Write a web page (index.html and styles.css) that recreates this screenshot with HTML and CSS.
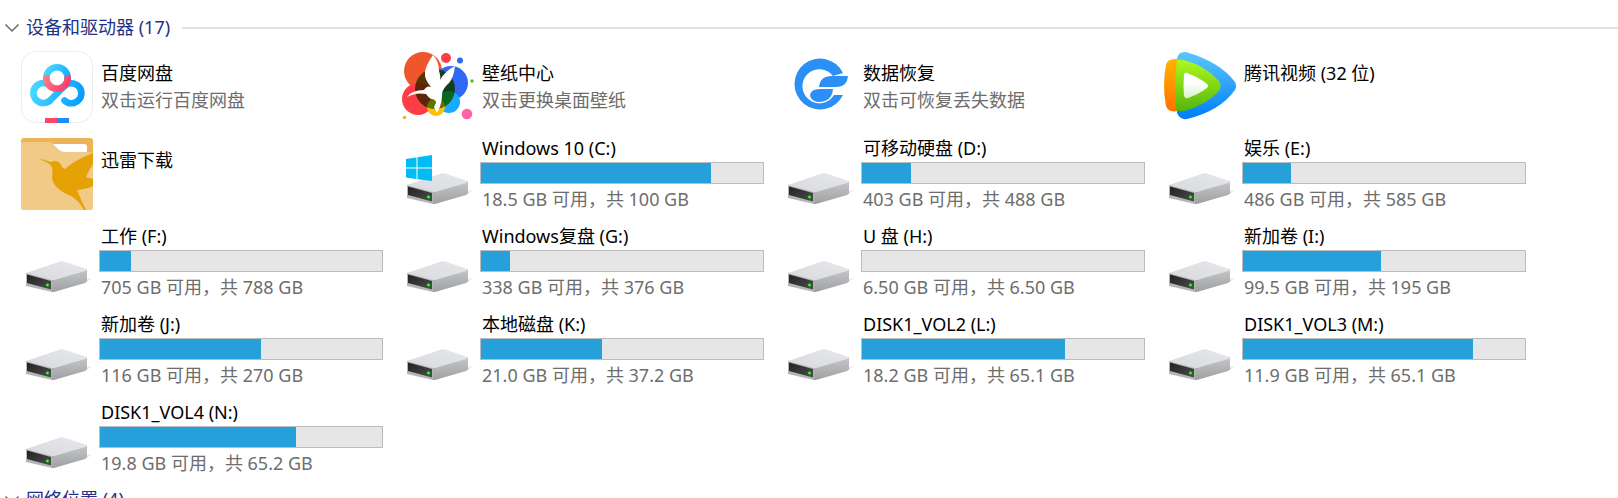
FILE: index.html
```
<!DOCTYPE html>
<html lang="zh-CN">
<head>
  <meta charset="UTF-8" />
  <meta name="viewport" content="width=device-width, initial-scale=1.0"/>
  <title>此电脑</title>
  <link rel="stylesheet" href="styles.css">
</head>
<body>

  <!-- Shared icons -->
  <svg class="sprite" aria-hidden="true">
    <defs>
      <linearGradient id="driveTop" x1="0" y1="1" x2="1" y2="0">
        <stop offset="0" stop-color="#d9dadd"/><stop offset="1" stop-color="#e6e7eb"/>
      </linearGradient>
      <linearGradient id="driveSide" x1="0" y1="0" x2="0" y2="1">
        <stop offset="0" stop-color="#c6c7c9"/><stop offset="1" stop-color="#9fa0a2"/>
      </linearGradient>
      <linearGradient id="driveFront" x1="0" y1="0" x2="1" y2="1">
        <stop offset="0" stop-color="#222"/><stop offset="1" stop-color="#4c4c4c"/>
      </linearGradient>
    </defs>
    <symbol id="drive" viewBox="0 0 72 72">
      <path d="M31 66 L66 53 L71 52 L66 56 Z" fill="#e9e9e9"/>
      <path d="M31 53 L66 43 V55 Q66 56 64 57 L33 66 L31 66 Z" fill="url(#driveSide)"/>
      <path d="M5 47 L39 35.500 Q41 35 43 35.500 L64 42.500 Q67 44 64 45 L33 54 L30 54 Z" fill="url(#driveTop)"/>
      <path d="M5 47 L31 54 V66 L5 60 Z" fill="#b4b5b7"/>
      <path d="M6 48.500 L30 55 V63.500 L6 57 Z" fill="url(#driveFront)"/>
      <circle cx="26.500" cy="59" r="2.200" fill="#1f7a1f"/>
      <circle cx="26.500" cy="59" r="1.200" fill="#4dff4d"/>
    </symbol>
  </svg>

  <!-- Devices and drives -->
  <section class="group">
    <h2 class="group-header">
      <button class="group-toggle" type="button" aria-expanded="true">
        <svg class="chevron" viewBox="0 0 14 14"><path d="M0.500 3.500 L7 10 L13.500 3.500"/></svg>
        设备和驱动器 (17)
      </button>
    </h2>

    <ul class="tiles">
      <li class="tile">
        <svg class="icon" viewBox="0 0 72 72">
          <defs>
            <linearGradient id="panBlue" gradientUnits="userSpaceOnUse" x1="9" y1="30" x2="63" y2="44">
              <stop offset="0" stop-color="#4cdcff"/><stop offset="1" stop-color="#069cff"/>
            </linearGradient>
            <linearGradient id="panTop" gradientUnits="userSpaceOnUse" x1="22" y1="20" x2="50" y2="30">
              <stop offset="0" stop-color="#4cdcff"/><stop offset="1" stop-color="#10a8ff"/>
            </linearGradient>
            <linearGradient id="panRed" gradientUnits="userSpaceOnUse" x1="22" y1="22" x2="48" y2="34">
              <stop offset="0" stop-color="#ff8487"/><stop offset="1" stop-color="#ff3b68"/>
            </linearGradient>
          </defs>
          <rect x="0.500" y="0.500" width="71" height="71" rx="14" fill="#fff" stroke="#ececec"/>
          <g fill="none" stroke-width="6.600" stroke-linecap="round">
            <path d="M30 48.500 A10 10 0 1 1 30 35.500 M29 49.500 L43 35.500 A10 10 0 1 1 43.500 49.500" stroke="url(#panBlue)"/>
            <circle cx="36" cy="27" r="10.700" fill="#fff" stroke="url(#panTop)"/>
            <path d="M25.300 27 A10.700 10.700 0 0 0 46.700 27" stroke="url(#panRed)"/>
          </g>
          <path d="M24 67 h12 v5 h-12 z" fill="#ff4468"/>
          <path d="M36 67 h12 v5 h-12 z" fill="#1f8bff"/>
        </svg>
        <div class="info">
          <div class="name">百度网盘</div>
          <div class="detail">双击运行百度网盘</div>
        </div>
      </li>

      <li class="tile">
        <svg class="icon" viewBox="0 0 72 72">
          <g class="overlap">
            <circle cx="21" cy="20" r="19" fill="#ef562b"/>
            <circle cx="49" cy="32" r="17" fill="#2f68f5"/>
            <circle cx="16" cy="48" r="16" fill="#ff3d45"/>
            <circle cx="47" cy="51" r="11" fill="#18aaff"/>
            <circle cx="34" cy="56" r="9" fill="#ffc000"/>
            <circle class="blend" cx="33" cy="38" r="20" fill="#5e9a20"/>
          </g>
          <circle cx="44" cy="7" r="5" fill="#ff3d45"/>
          <circle cx="58" cy="9.500" r="3" fill="#2f68f5"/>
          <circle cx="70" cy="30" r="1.700" fill="#5bb717"/>
          <circle cx="65" cy="63" r="5.300" fill="#ff62a5"/>
          <circle cx="2.500" cy="66.500" r="1.800" fill="#ffb600"/>
          <path d="M31 4 Q37 10 37 20 Q39 26 38 29 Q43 20 53 15 Q52 26 47 32 Q40 38 40 44 Q40 53 35 62 L32 56 L34 52 Q34 48 29 48 Q26 46 24 43 Q14 41 5 46 Q10 39 22 39 Q25 34 29 36 Q22 28 23 21 Q24 14 31 4 Z" fill="#fff"/>
        </svg>
        <div class="info">
          <div class="name">壁纸中心</div>
          <div class="detail">双击更换桌面壁纸</div>
        </div>
      </li>

      <li class="tile">
        <svg class="icon" viewBox="0 0 72 72">
          <g fill="#2c8ff5">
            <path d="M60 22 A25.500 25.500 0 1 0 60 44 L51 44 A17 17 0 1 1 50 25 Z"/>
            <path d="M36 36 Q37 25 49 25 L65 25 Q64 36 54 36 Z"/>
            <path d="M50 38 H37 Q27 38 27 45 Q29 51 37 51 Q49 50 50 38 Z"/>
          </g>
        </svg>
        <div class="info">
          <div class="name">数据恢复</div>
          <div class="detail">双击可恢复丢失数据</div>
        </div>
      </li>

      <li class="tile">
        <svg class="icon" viewBox="0 0 72 72">
          <defs>
            <linearGradient id="videoBlue" x1="0" y1="0" x2="0" y2="1">
              <stop offset="0" stop-color="#5ac8fd"/><stop offset="1" stop-color="#007df8"/>
            </linearGradient>
            <linearGradient id="videoOrange" x1="0" y1="0" x2="0" y2="1">
              <stop offset="0" stop-color="#ffb400"/><stop offset="1" stop-color="#ff7100"/>
            </linearGradient>
            <linearGradient id="videoGreen" x1="0" y1="0" x2="0" y2="1">
              <stop offset="0" stop-color="#aef91f"/><stop offset="1" stop-color="#55b50c"/>
            </linearGradient>
            <linearGradient id="videoPlay" x1="0" y1="0" x2="0" y2="1">
              <stop offset="0.400" stop-color="#fff"/><stop offset="1" stop-color="#d9f0c8"/>
            </linearGradient>
          </defs>
          <path d="M13 7 Q15 0 22 1 Q56 11 71 31 Q73 35 71 39 Q56 60 23 68 Q16 69 13 62 Z" fill="url(#videoBlue)"/>
          <path d="M14 8 Q3 7 2 14 Q-2 35 2 55 Q4 62 14 60 Z" fill="url(#videoOrange)"/>
          <path d="M13 9 Q16 8 20 9 Q42 15 55 30 Q58 35 55 40 Q42 54 20 60 Q15 61 12 59 Q10 35 13 9 Z" fill="url(#videoGreen)"/>
          <path d="M20 24 Q20 21 23 22 Q36 27 43 33 Q45 35 43 37 Q35 43 24 47 Q21 48 20 45 Q19 35 20 24 Z" fill="url(#videoPlay)"/>
        </svg>
        <div class="info">
          <div class="name">腾讯视频 (32 位)</div>
        </div>
      </li>

      <li class="tile">
        <svg class="icon" viewBox="0 0 72 72">
          <rect width="72" height="72" rx="3" fill="#edb358"/>
          <path d="M30 6 H63 Q66 6 66 9 V16 H36 Z" fill="#fff"/>
          <path d="M0 6 Q0 4 2 4 H28 Q31 4 33 7 L37 11 Q40 14 43 14 H69 Q72 14 72 17 V69 Q72 72 69 72 H3 Q0 72 0 69 Z" fill="#f1ca87"/>
          <path d="M17 20 L30 24 Q37 21 40 27 Q41 30 44 31 Q54 22 72 15 V26 Q68 32 65 39 L72 41 V48 Q66 51 56 52 Q60 62 65 72 H63 Q57 61 48 57 Q31 50 31 38 Q33 28 27 25 Z" fill="#e6a204"/>
        </svg>
        <div class="info">
          <div class="name">迅雷下载</div>
        </div>
      </li>

      <li class="tile">
        <svg class="icon" viewBox="0 0 72 72">
          <use href="#drive"/>
          <path d="M4 21 L14.500 19.500 V29.500 H4 Z M15.500 19.300 L30 17 V29.500 H15.500 Z M4 30.500 H14.500 V41 L4 39.500 Z M15.500 30.500 H30 V43 L15.500 41.200 Z" fill="#00bcf2"/>
        </svg>
        <div class="info">
          <label class="name" for="driveC">Windows 10 (C:)</label>
          <progress id="driveC" class="usage" value="81.5" max="100"></progress>
          <div class="detail">18.5 GB 可用，共 100 GB</div>
        </div>
      </li>

      <li class="tile">
        <svg class="icon"><use href="#drive"/></svg>
        <div class="info">
          <label class="name" for="driveD">可移动硬盘 (D:)</label>
          <progress id="driveD" class="usage" value="85" max="488"></progress>
          <div class="detail">403 GB 可用，共 488 GB</div>
        </div>
      </li>

      <li class="tile">
        <svg class="icon"><use href="#drive"/></svg>
        <div class="info">
          <label class="name" for="driveE">娱乐 (E:)</label>
          <progress id="driveE" class="usage" value="99" max="585"></progress>
          <div class="detail">486 GB 可用，共 585 GB</div>
        </div>
      </li>

      <li class="tile">
        <svg class="icon"><use href="#drive"/></svg>
        <div class="info">
          <label class="name" for="driveF">工作 (F:)</label>
          <progress id="driveF" class="usage" value="86" max="788"></progress>
          <div class="detail">705 GB 可用，共 788 GB</div>
        </div>
      </li>

      <li class="tile">
        <svg class="icon"><use href="#drive"/></svg>
        <div class="info">
          <label class="name" for="driveG">Windows复盘 (G:)</label>
          <progress id="driveG" class="usage" value="38" max="376"></progress>
          <div class="detail">338 GB 可用，共 376 GB</div>
        </div>
      </li>

      <li class="tile">
        <svg class="icon"><use href="#drive"/></svg>
        <div class="info">
          <label class="name" for="driveH">U 盘 (H:)</label>
          <progress id="driveH" class="usage" value="0" max="6.5"></progress>
          <div class="detail">6.50 GB 可用，共 6.50 GB</div>
        </div>
      </li>

      <li class="tile">
        <svg class="icon"><use href="#drive"/></svg>
        <div class="info">
          <label class="name" for="driveI">新加卷 (I:)</label>
          <progress id="driveI" class="usage" value="95.5" max="195"></progress>
          <div class="detail">99.5 GB 可用，共 195 GB</div>
        </div>
      </li>

      <li class="tile">
        <svg class="icon"><use href="#drive"/></svg>
        <div class="info">
          <label class="name" for="driveJ">新加卷 (J:)</label>
          <progress id="driveJ" class="usage" value="154" max="270"></progress>
          <div class="detail">116 GB 可用，共 270 GB</div>
        </div>
      </li>

      <li class="tile">
        <svg class="icon"><use href="#drive"/></svg>
        <div class="info">
          <label class="name" for="driveK">本地磁盘 (K:)</label>
          <progress id="driveK" class="usage" value="16" max="37.2"></progress>
          <div class="detail">21.0 GB 可用，共 37.2 GB</div>
        </div>
      </li>

      <li class="tile">
        <svg class="icon"><use href="#drive"/></svg>
        <div class="info">
          <label class="name" for="driveL">DISK1_VOL2 (L:)</label>
          <progress id="driveL" class="usage" value="46.9" max="65.1"></progress>
          <div class="detail">18.2 GB 可用，共 65.1 GB</div>
        </div>
      </li>

      <li class="tile">
        <svg class="icon"><use href="#drive"/></svg>
        <div class="info">
          <label class="name" for="driveM">DISK1_VOL3 (M:)</label>
          <progress id="driveM" class="usage" value="53.2" max="65.1"></progress>
          <div class="detail">11.9 GB 可用，共 65.1 GB</div>
        </div>
      </li>

      <li class="tile">
        <svg class="icon"><use href="#drive"/></svg>
        <div class="info">
          <label class="name" for="driveN">DISK1_VOL4 (N:)</label>
          <progress id="driveN" class="usage" value="45.4" max="65.2"></progress>
          <div class="detail">19.8 GB 可用，共 65.2 GB</div>
        </div>
      </li>
    </ul>
  </section>

  <!-- Network locations -->
  <section class="group">
    <h2 class="group-header">
      <button class="group-toggle" type="button" aria-expanded="true">
        <svg class="chevron" viewBox="0 0 14 14"><path d="M0.500 3.500 L7 10 L13.500 3.500"/></svg>
        网络位置 (4)
      </button>
    </h2>
  </section>

</body>
</html>
```
FILE: styles.css
```
html {
  overflow: hidden;
}

body {
  margin: 0;
  padding-top: 14px;
  background: #fff;
  color: #000;
  font-family: 'Noto Sans', 'Noto Sans CJK SC', sans-serif;
  font-size: 18px;
  line-height: 27px;
}

.sprite {
  position: absolute;
  width: 0;
  height: 0;
}

/* Group header */
.group-header {
  display: flex;
  align-items: center;
  gap: 12px;
  margin: 0;
  padding-left: 5px;
  font-size: 18px;
  font-weight: 400;
}

.group-header::after {
  content: "";
  flex: 1;
  height: 2px;
  background: #e2e2e2;
}

.group-toggle {
  display: flex;
  align-items: center;
  gap: 7px;
  padding: 0;
  border: none;
  background: none;
  color: #1e3287;
  font: inherit;
  line-height: 27px;
  cursor: pointer;
}

.chevron {
  width: 14px;
  height: 14px;
  fill: none;
  stroke: #6b6b6b;
  stroke-width: 1.5;
}

/* Tiles */
.tiles {
  display: grid;
  grid-template-columns: repeat(auto-fill, 362px);
  column-gap: 19px;
  margin: 0;
  padding: 3px 0 4px 21px;
  list-style: none;
}

.tile {
  display: flex;
  align-items: center;
  gap: 6px;
  min-height: 76px;
  padding: 5px 0;
}

.icon {
  flex: none;
  width: 72px;
  height: 72px;
}

.overlap {
  isolation: isolate;
}

.blend {
  mix-blend-mode: multiply;
}

.info {
  flex: 1;
  min-width: 0;
  min-height: 54px;
}

.name,
.detail {
  display: block;
  padding-left: 2px;
  white-space: nowrap;
}

.detail {
  color: #6d6d6d;
}

/* Used space bar */
.usage {
  display: block;
  box-sizing: border-box;
  width: 100%;
  height: 22px;
  margin-bottom: 2px;
  border: 1px solid #bcbcbc;
  background: #e6e6e6;
  appearance: none;
  -webkit-appearance: none;
}

.usage::-webkit-progress-bar {
  background: #e6e6e6;
}

.usage::-webkit-progress-value {
  background: #26a0da;
}
```
